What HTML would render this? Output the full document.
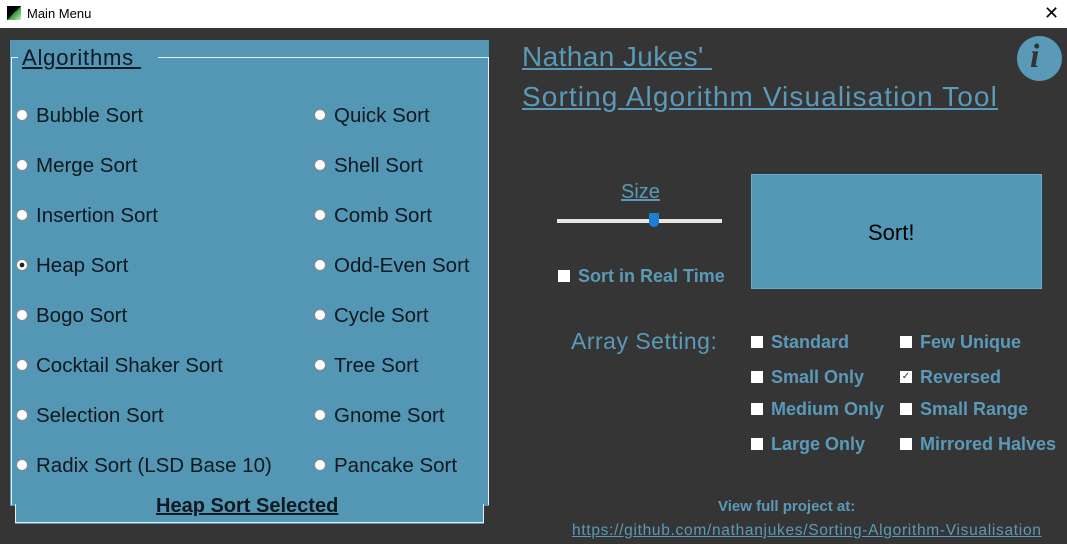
<!DOCTYPE html>
<html><head><meta charset="utf-8"><style>
*{margin:0;padding:0;box-sizing:border-box}
body{width:1067px;height:544px;background:#353535;position:relative;overflow:hidden;font-family:"Liberation Sans","DejaVu Sans",sans-serif}
.a{position:absolute;white-space:nowrap}
.tb{left:0;top:0;width:1067px;height:28px;background:#fff}
.blue{background:#5397b5}
.lt{font-size:20.5px;color:#101820;line-height:24px}
.rd{width:12px;height:12px;border-radius:50%;background:#fff;border:1px solid #888}
.rt{color:#5a9ab8;font-weight:bold;font-size:18px}
.cb{width:12px;height:12px;background:#fff}
</style></head><body>
<div class="a tb"></div>
<div class="a" style="left:7px;top:6px;width:14px;height:14px;background:linear-gradient(135deg,#000 50%,#2a9a2a 50%,#cfe9cf)"></div>
<div class="a" style="left:27px;top:6px;font-size:13px;color:#000">Main Menu</div>
<div class="a" style="left:1044px;top:3px;font-size:18px;color:#000">✕</div>

<div class="a blue" style="left:10px;top:40px;width:479px;height:466px"></div>
<div class="a blue" style="left:15px;top:500px;width:469px;height:24px"></div>
<div class="a" style="left:11px;top:57px;width:478px;height:448px;border:1px solid #e8f0f4;border-bottom:none"></div>
<div class="a" style="left:15px;top:504px;width:469px;height:19px;border:1px solid #e8f0f4;border-top:none"></div>
<div class="a blue" style="left:18px;top:45px;width:140px;height:25px"></div>
<div class="a" style="left:22px;top:45px;font-size:22px;color:#101820;text-decoration:underline;letter-spacing:0.8px">Algorithms&nbsp;</div>

<div class="a rd" style="left:16px;top:109px"></div><div class="a lt" style="left:36px;top:104px">Bubble Sort</div>
<div class="a rd" style="left:16px;top:159px"></div><div class="a lt" style="left:36px;top:154px">Merge Sort</div>
<div class="a rd" style="left:16px;top:209px"></div><div class="a lt" style="left:36px;top:204px">Insertion Sort</div>
<div class="a rd" style="left:16px;top:259px;background:radial-gradient(circle,#222 30%,#fff 36%)"></div><div class="a lt" style="left:36px;top:254px">Heap Sort</div>
<div class="a rd" style="left:16px;top:309px"></div><div class="a lt" style="left:36px;top:304px">Bogo Sort</div>
<div class="a rd" style="left:16px;top:359px"></div><div class="a lt" style="left:36px;top:354px">Cocktail Shaker Sort</div>
<div class="a rd" style="left:16px;top:409px"></div><div class="a lt" style="left:36px;top:404px">Selection Sort</div>
<div class="a rd" style="left:16px;top:459px"></div><div class="a lt" style="left:36px;top:454px">Radix Sort (LSD Base 10)</div>

<div class="a rd" style="left:314px;top:109px"></div><div class="a lt" style="left:334px;top:104px">Quick Sort</div>
<div class="a rd" style="left:314px;top:159px"></div><div class="a lt" style="left:334px;top:154px">Shell Sort</div>
<div class="a rd" style="left:314px;top:209px"></div><div class="a lt" style="left:334px;top:204px">Comb Sort</div>
<div class="a rd" style="left:314px;top:259px"></div><div class="a lt" style="left:334px;top:254px">Odd-Even Sort</div>
<div class="a rd" style="left:314px;top:309px"></div><div class="a lt" style="left:334px;top:304px">Cycle Sort</div>
<div class="a rd" style="left:314px;top:359px"></div><div class="a lt" style="left:334px;top:354px">Tree Sort</div>
<div class="a rd" style="left:314px;top:409px"></div><div class="a lt" style="left:334px;top:404px">Gnome Sort</div>
<div class="a rd" style="left:314px;top:459px"></div><div class="a lt" style="left:334px;top:454px">Pancake Sort</div>

<div class="a" style="left:156px;top:495px;font-size:20px;font-weight:bold;color:#101820;text-decoration:underline">Heap Sort Selected</div>

<div class="a" style="left:522px;top:40px;font-size:28px;color:#5a9ab8;text-decoration:underline;line-height:34px;letter-spacing:0.4px">Nathan Jukes'&nbsp;</div>
<div class="a" style="left:522px;top:80px;font-size:28px;color:#5a9ab8;text-decoration:underline;line-height:34px;letter-spacing:1.1px">Sorting Algorithm Visualisation Tool</div>

<div class="a" style="left:1017px;top:36px;width:45px;height:45px;border-radius:50%;background:#5a9ab8"></div>
<div class="a" style="left:1030px;top:38px;font-size:34px;font-weight:bold;font-style:italic;color:#333;font-family:'Liberation Serif',serif">i</div>

<div class="a" style="left:621px;top:181px;font-size:20px;color:#5a9ab8;text-decoration:underline">Size</div>
<div class="a" style="left:557px;top:219px;width:165px;height:4px;background:#e6e6e6"></div>
<div class="a" style="left:649px;top:213px;width:10px;height:14px;background:#1a7fd6;border-radius:1px 1px 5px 5px"></div>
<div class="a cb" style="left:558px;top:270px"></div>
<div class="a rt" style="left:578px;top:266px">Sort in Real Time</div>

<div class="a" style="left:751px;top:174px;width:291px;height:115px;background:#5397b5;border:1px solid #6aaacb"></div>
<div class="a" style="left:868px;top:220px;font-size:22px;color:#000">Sort!</div>

<div class="a" style="left:571px;top:328px;font-size:23px;color:#5a9ab8;letter-spacing:0.5px">Array Setting:</div>
<div class="a cb" style="left:751px;top:336px"></div><div class="a rt" style="left:771px;top:332px">Standard</div>
<div class="a cb" style="left:751px;top:371px"></div><div class="a rt" style="left:771px;top:367px">Small Only</div>
<div class="a cb" style="left:751px;top:403px"></div><div class="a rt" style="left:771px;top:399px">Medium Only</div>
<div class="a cb" style="left:751px;top:438px"></div><div class="a rt" style="left:771px;top:434px">Large Only</div>
<div class="a cb" style="left:900px;top:336px"></div><div class="a rt" style="left:920px;top:332px">Few Unique</div>
<div class="a cb" style="left:900px;top:371px;font-size:10px;line-height:12px;text-align:center;color:#333">✓</div><div class="a rt" style="left:920px;top:367px">Reversed</div>
<div class="a cb" style="left:900px;top:403px"></div><div class="a rt" style="left:920px;top:399px">Small Range</div>
<div class="a cb" style="left:900px;top:438px"></div><div class="a rt" style="left:920px;top:434px">Mirrored Halves</div>

<div class="a" style="left:718px;top:498px;font-size:15px;font-weight:bold;color:#5a9ab8">View full project at:</div>
<div class="a" style="left:572px;top:522px;font-size:15.5px;color:#5a9ab8;text-decoration:underline;letter-spacing:0.7px">https://github.com/nathanjukes/Sorting-Algorithm-Visualisation</div>
</body></html>
